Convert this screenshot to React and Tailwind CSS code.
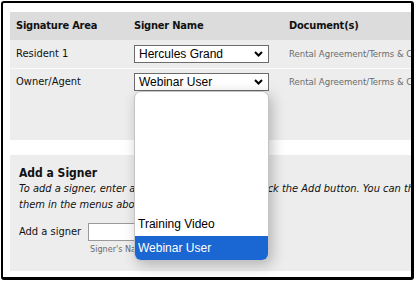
import React from "react";

const sans = { fontFamily: '"DejaVu Sans Condensed", "DejaVu Sans", sans-serif' };

function FakeSelect({ value }) {
  return (
    <div className="w-[135px] h-[18px] border border-[#6b6b6b] bg-white flex items-center justify-between pl-[4px] pr-[5px]">
      <span className="font-['Liberation_Sans',sans-serif] text-[12px] leading-none text-black">{value}</span>
      <svg width="9" height="6" viewBox="0 0 9 6">
        <path d="M1 1 L4.5 4.5 L8 1" fill="none" stroke="#000" strokeWidth="2" />
      </svg>
    </div>
  );
}

export default function App() {
  const rows = [
    { area: "Resident 1", signer: "Hercules Grand" },
    { area: "Owner/Agent", signer: "Webinar User" },
  ];

  return (
    <div className="w-[415px] h-[281px] bg-white overflow-hidden" style={sans}>
      <div className="relative ml-px mt-px w-[413px] h-[279px] border-l-2 border-t-2 border-r-[3px] border-b-[3px] border-black rounded-[3px] bg-white overflow-hidden pl-[7px] pt-[9px]">
        <div className="w-[420px]">
          {/* table header */}
          <div className="flex items-center h-[28px] bg-[#dcdcdc] text-[11px] font-bold tracking-[-0.2px] text-[#111]">
            <div className="w-[124px] shrink-0 pl-[6px]">Signature Area</div>
            <div className="w-[155px] shrink-0">Signer Name</div>
            <div className="flex-1 whitespace-nowrap">Document(s)</div>
          </div>
          {rows.map((r, i) => (
            <div
              key={r.area}
              className={`flex items-start bg-[#ededed] text-[11px] text-[#111] ${i === 0 ? "h-[29px] pt-[5px] border-b border-[#fafafa]" : "h-[71px] pt-[4px]"}`}
            >
              <div className="w-[124px] shrink-0 pl-[6px] h-[18px] flex items-center">{r.area}</div>
              <div className="w-[155px] shrink-0">
                <FakeSelect value={r.signer} />
              </div>
              <div className="flex-1 h-[18px] flex items-center text-[9.5px] text-[#6b6b6b] whitespace-nowrap">
                Rental Agreement/Terms &amp; Conditions
              </div>
            </div>
          ))}

          <div className="h-[15px]" />

          {/* add a signer */}
          <div className="h-[116px] bg-[#ededed] pl-[9px] pt-[10px]">
            <div className="text-[12px] font-bold text-[#111] leading-[16px]">Add a Signer</div>
            <p className="text-[11px] italic text-[#111] leading-[16px] whitespace-nowrap">
              <span className="block">To add a signer, enter a new signer's name and click the Add button. You can then select</span>
              <span className="block">them in the menus above.</span>
            </p>
            <div className="flex items-center mt-[10px] gap-[7px]">
              <span className="text-[11px] text-[#111]">Add a signer</span>
              <div className="w-[181px] h-[18px] border border-[#9a9a9a] bg-white" />
            </div>
            <div className="ml-[71px] mt-[2px] text-[9px] text-[#6b6b6b]">Signer's Name</div>
          </div>
        </div>

        {/* open dropdown list */}
        <div className="absolute left-[131px] top-[88px] w-[135px] h-[170px] bg-white border border-[#c4c4c4] rounded-[7px] shadow-[3px_4px_14px_rgba(0,0,0,0.25)] overflow-hidden flex flex-col justify-end font-['Liberation_Sans',sans-serif] text-[12px]">
          <div className="h-[24px] flex items-center pl-[3px] text-black">Training Video</div>
          <div className="h-[24px] flex items-center pl-[3px] bg-[#1a66d2] text-white">Webinar User</div>
        </div>
      </div>
    </div>
  );
}
